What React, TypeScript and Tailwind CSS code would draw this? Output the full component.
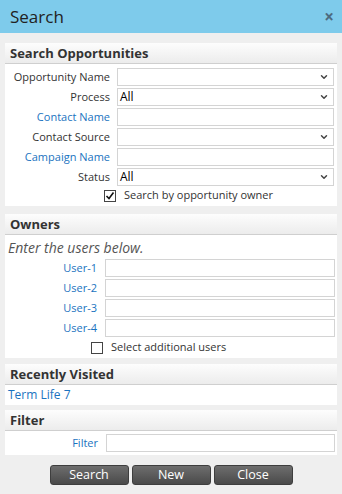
import { ChevronDown } from "lucide-react";

const font = { fontFamily: '"Open Sans", "Noto Sans", sans-serif' };

function Select({ value = "" }: { value?: string }) {
  return (
    <div className="h-[18px] bg-white border border-[#d4d4d4] flex items-center justify-between pl-[2px] pr-[4px] text-[12px] text-black">
      <span>{value}</span>
      <ChevronDown size={10} strokeWidth={3.5} className="text-[#444]" />
    </div>
  );
}

function TextBox() {
  return <div className="h-[18px] bg-white border border-[#d4d4d4]" />;
}

function Label({ text, link }: { text: string; link?: boolean }) {
  return (
    <div
      className={`text-right whitespace-nowrap text-[11px] leading-[18px] ${
        link ? "text-[#1a73c0]" : "text-[#333]"
      }`}>
      {text}
    </div>
  );
}

function Panel({ title, children }: { title: string; children: React.ReactNode }) {
  return (
    <div className="mx-[5px] bg-white">
      <div className="h-[21px] bg-gradient-to-b from-[#fdfdfd] to-[#ececec] border-b border-[#cfcfcf] px-[5px] text-[13px] font-bold text-[#333] leading-[21px]">
        {title}
      </div>
      {children}
    </div>
  );
}

function Check({ checked }: { checked?: boolean }) {
  return (
    <div className="w-[12px] h-[12px] border border-[#444] bg-white flex items-center justify-center">
      {checked && (
        <svg width="10" height="10" viewBox="0 0 10 10">
          <path d="M1.5 5 L4 7.5 L8.5 1.5" fill="none" stroke="#111" strokeWidth="1.6" />
        </svg>
      )}
    </div>
  );
}

export default function App() {
  return (
    <div className="w-[342px] h-[494px] bg-[#efefef] flex flex-col" style={font}>
      <div className="h-[33px] bg-[#7ecbeb] flex items-center justify-between pl-[10px] pr-[8px]">
        <span className="text-[17px] text-[#222]">Search</span>
        <span className="text-[17px] font-bold text-[#4d6b80] leading-none">×</span>
      </div>

      <div className="mt-[10px]">
        <Panel title="Search Opportunities">
          <div className="grid grid-cols-[105px_1fr] gap-x-[7px] gap-y-[2px] pr-[3px] pt-[4px]">
            <Label text="Opportunity Name" />
            <Select />
            <Label text="Process" />
            <Select value="All" />
            <Label text="Contact Name" link />
            <TextBox />
            <Label text="Contact Source" />
            <Select />
            <Label text="Campaign Name" link />
            <TextBox />
            <Label text="Status" />
            <Select value="All" />
          </div>
          <div className="flex items-center pl-[99px] pt-[3px] pb-[4px] h-[20px]">
            <Check checked />
            <span className="ml-[8px] text-[11px] text-[#333]">Search by opportunity owner</span>
          </div>
        </Panel>
      </div>

      <div className="mt-[8px]">
        <Panel title="Owners">
          <div className="px-[3px] pt-[3px] pb-[1px] text-[14px] italic text-[#555] leading-[20px]">
            Enter the users below.
          </div>
          <div className="grid grid-cols-[92px_1fr] gap-x-[8px] gap-y-[2px] pr-[2px]">
            <Label text="User-1" link />
            <TextBox />
            <Label text="User-2" link />
            <TextBox />
            <Label text="User-3" link />
            <TextBox />
            <Label text="User-4" link />
            <TextBox />
          </div>
          <div className="flex items-center pl-[86px] h-[21px]">
            <Check />
            <span className="ml-[8px] text-[11px] text-[#333]">Select additional users</span>
          </div>
        </Panel>
      </div>

      <div className="mt-[6px]">
        <Panel title="Recently Visited">
          <div className="px-[3px] h-[20px] leading-[20px] text-[12px] text-[#1a73c0]">Term Life 7</div>
        </Panel>
      </div>

      <div className="mt-[5px]">
        <Panel title="Filter">
          <div className="grid grid-cols-[93px_1fr] gap-x-[8px] pr-[2px] pt-[3px] pb-[3px]">
            <Label text="Filter" link />
            <TextBox />
          </div>
        </Panel>
      </div>

      <div className="flex justify-center gap-[3px] mt-[10px]">
        {["Search", "New", "Close"].map((b) => (
          <div
            key={b}
            className="w-[79px] h-[20px] rounded-[3px] bg-gradient-to-b from-[#6e6e6e] to-[#4a4a4a] border border-[#3e3e3e] text-white text-[12.5px] flex items-center justify-center">
            {b}
          </div>
        ))}
      </div>
    </div>
  );
}
